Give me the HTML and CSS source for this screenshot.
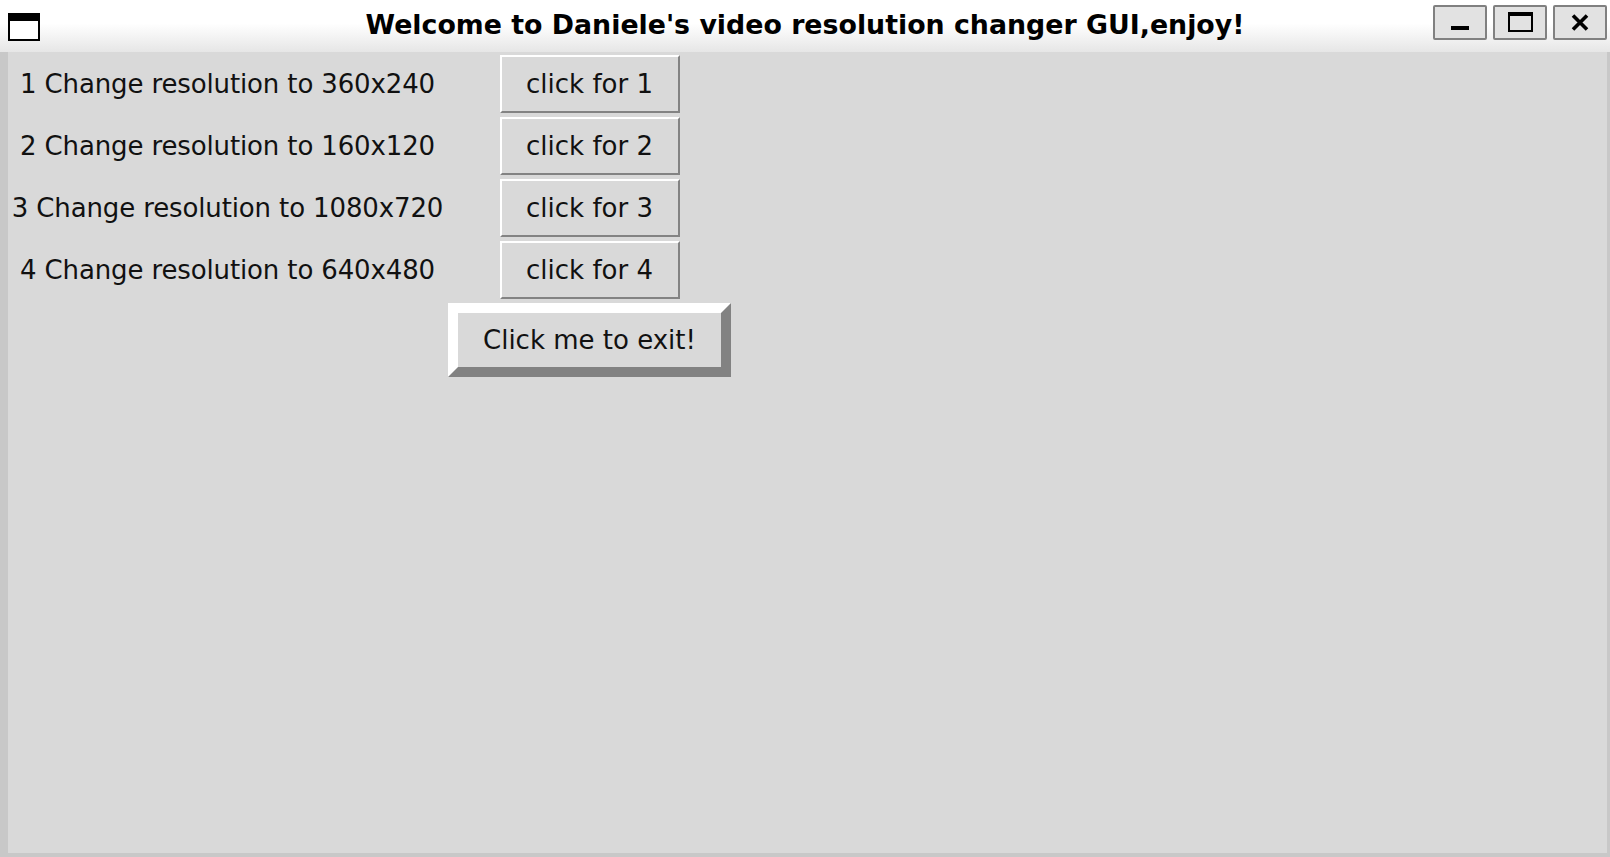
FILE: index.html
```html
<!DOCTYPE html>
<html>
<head>
<meta charset="utf-8">
<link rel="stylesheet" href="styles.css">
</head>
<body>
<div class="window">
  <div class="titlebar">
    <div class="tb-left">
      <svg class="app-icon" width="32" height="28" viewBox="0 0 32 28">
        <rect x="1" y="1" width="30" height="26" fill="#fff" stroke="#000" stroke-width="2"/>
        <rect x="0" y="0" width="32" height="8" fill="#000"/>
      </svg>
    </div>
    <div class="title">Welcome to Daniele's video resolution changer GUI,enjoy!</div>
    <div class="tb-right">
      <div class="wbtn">
        <svg width="18" height="4" viewBox="0 0 18 4"><rect width="18" height="4" fill="#000"/></svg>
      </div>
      <div class="wbtn">
        <svg width="25" height="20" viewBox="0 0 25 20"><rect x="1" y="2" width="23" height="17" fill="none" stroke="#000" stroke-width="2"/><rect x="0" y="0" width="25" height="4" fill="#000"/></svg>
      </div>
      <div class="wbtn">
        <svg width="18" height="17" viewBox="0 0 18 17"><path d="M2 1.5 L16 15.5 M16 1.5 L2 15.5" stroke="#000" stroke-width="3.6" fill="none"/></svg>
      </div>
    </div>
  </div>
  <div class="client">
    <div class="grid">
      <div class="label">1 Change resolution to 360x240</div>
      <div class="cell"><button class="btn">click for 1</button></div>
      <div class="label">2 Change resolution to 160x120</div>
      <div class="cell"><button class="btn">click for 2</button></div>
      <div class="label">3 Change resolution to 1080x720</div>
      <div class="cell"><button class="btn">click for 3</button></div>
      <div class="label">4 Change resolution to 640x480</div>
      <div class="cell"><button class="btn">click for 4</button></div>
      <div class="spacer"></div>
      <div class="cell exit-cell"><button class="exit">Click me to exit!</button></div>
    </div>
  </div>
</div>
</body>
</html>
```

FILE: styles.css
```css
html, body {
  margin: 0;
  padding: 0;
  background: #c8c8c8;
}
.window {
  width: 1610px;
  height: 857px;
  display: flex;
  flex-direction: column;
  font-family: "DejaVu Sans", sans-serif;
}
.titlebar {
  height: 52px;
  flex: none;
  display: grid;
  grid-template-columns: 1fr auto 1fr;
  align-items: center;
  background: linear-gradient(to bottom, #ffffff 0%, #ffffff 45%, #e6e6e6 100%);
}
.tb-left {
  display: flex;
  padding-left: 8px;
  padding-top: 2px;
}
.app-icon {
  display: block;
}
.title {
  font-weight: bold;
  font-size: 26.8px;
  color: #000;
  white-space: nowrap;
  padding-bottom: 4px;
}
.tb-right {
  display: flex;
  justify-content: flex-end;
  gap: 6px;
  padding-right: 3px;
  padding-bottom: 8px;
}
.wbtn {
  width: 50px;
  height: 31px;
  border: 2px solid #808080;
  border-radius: 2px;
  background: #e2e2e2;
  display: flex;
  align-items: center;
  justify-content: center;
}
.wbtn:first-child svg {
  margin-top: 12px;
}
.client {
  flex: 1;
  background: #d9d9d9;
  border-left: 8px solid #c8c8c8;
  border-right: 3px solid #c8c8c8;
  border-bottom: 4px solid #c8c8c8;
}
.grid {
  display: grid;
  grid-template-columns: 439px 285px;
  grid-template-rows: repeat(4, 62px) 78px;
  padding-top: 1px;
}
.label {
  display: flex;
  align-items: center;
  justify-content: center;
  font-size: 26px;
  letter-spacing: -0.13px;
  color: #111;
  white-space: nowrap;
}
.cell {
  display: flex;
  align-items: center;
  justify-content: center;
}
.btn {
  width: 180px;
  height: 58px;
  box-sizing: border-box;
  border-style: solid;
  border-width: 2px;
  border-color: #ffffff #838383 #838383 #ffffff;
  background: #d9d9d9;
  font-family: "DejaVu Sans", sans-serif;
  font-size: 26px;
  color: #111;
  padding: 0;
}
.exit {
  width: 283px;
  height: 74px;
  box-sizing: border-box;
  border-style: solid;
  border-width: 10px;
  border-color: #ffffff #828282 #828282 #ffffff;
  background: #d9d9d9;
  font-family: "DejaVu Sans", sans-serif;
  font-size: 26px;
  color: #111;
  padding: 0;
}
```
